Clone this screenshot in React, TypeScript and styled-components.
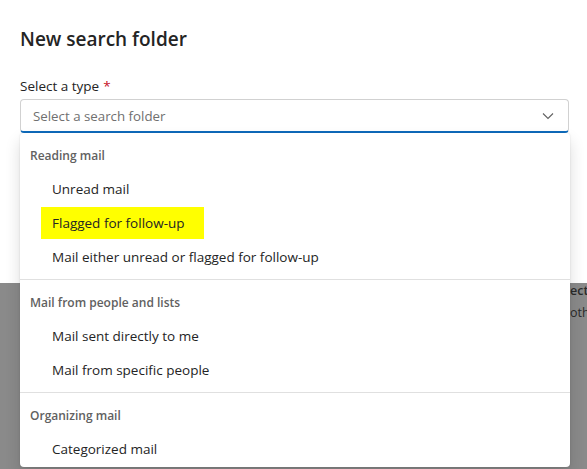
import React from "react";
import styled, { createGlobalStyle } from "styled-components";

const Global = createGlobalStyle`
  html, body { margin: 0; padding: 0; }
  body {
    width: 587px;
    height: 469px;
    overflow: hidden;
    font-family: "Open Sans", "Segoe UI", "Liberation Sans", Arial, sans-serif;
    -webkit-font-smoothing: antialiased;
  }
`;

const Page = styled.div`
  position: relative;
  width: 587px;
  height: 469px;
  background: #8a8a8a;
  overflow: hidden;
  display: flex;
  flex-direction: column;
`;

const Dialog = styled.div`
  height: 283px;
  flex: none;
  background: #ffffff;
  padding: 25px 18px 0 20px;
  box-sizing: border-box;
  display: flex;
  flex-direction: column;
`;

const Title = styled.h2`
  margin: 0;
  font-size: 19px;
  font-weight: 600;
  line-height: 28px;
  color: #242424;
`;

const Field = styled.div`
  position: relative;
  margin-top: 23px;
  display: flex;
  flex-direction: column;
  gap: 3px;
`;

const Label = styled.label`
  font-size: 13.5px;
  line-height: 20px;
  color: #242424;
`;

const Required = styled.span`
  color: #c50f1f;
  padding-left: 4px;
`;

const Combo = styled.div`
  height: 34px;
  box-sizing: border-box;
  border: 1px solid #d1d1d1;
  border-bottom: 2px solid #0f6cbd;
  border-radius: 4px;
  display: flex;
  align-items: center;
  justify-content: space-between;
  padding: 1px 14px 0 12px;
  font-size: 13.3px;
  color: #707070;
`;

const Menu = styled.div`
  position: absolute;
  top: 100%;
  left: 0;
  width: 550px;
  height: 334px;
  background: #ffffff;
  border-radius: 4px;
  box-shadow: 0 0 2px rgba(0, 0, 0, 0.12), 0 8px 16px rgba(0, 0, 0, 0.14);
  display: flex;
  flex-direction: column;
  overflow: hidden;
`;

const Group = styled.div`
  display: flex;
  flex-direction: column;
  flex: none;
  padding: 4px 0 5px;
  & + & {
    border-top: 1px solid #e0e0e0;
  }
`;

const GroupHeader = styled.div`
  font-size: 12px;
  font-weight: 600;
  color: #616161;
  line-height: 16px;
  padding: 11px 10px 8px;
`;

const Option = styled.div`
  height: 34px;
  display: flex;
  align-items: center;
  padding-left: 21px;
`;

const OptionText = styled.span<{ $marked?: boolean }>`
  height: 32px;
  display: flex;
  align-items: center;
  padding: 0 ${(p) => (p.$marked ? 19 : 11)}px 0 11px;
  font-size: 13.5px;
  color: #242424;
  background: ${(p) => (p.$marked ? "#ffff00" : "transparent")};
`;

const Beneath = styled.div`
  flex: 1;
  display: flex;
  flex-direction: column;
  gap: 6px;
  padding-left: 570px;
  white-space: nowrap;
  font-size: 12.5px;
  color: #2a2a2a;
  line-height: 16px;
`;

const BeneathLine = styled.span<{ $bold?: boolean }>`
  font-weight: ${(p) => (p.$bold ? 600 : 400)};
`;

const Chevron = () => (
  <svg width="12" height="12" viewBox="0 0 12 12" fill="none">
    <path d="M1 3.5 L6 8.5 L11 3.5" stroke="#616161" strokeWidth="1.1" />
  </svg>
);

const groups = [
  {
    title: "Reading mail",
    items: ["Unread mail", "Flagged for follow-up", "Mail either unread or flagged for follow-up"],
  },
  { title: "Mail from people and lists", items: ["Mail sent directly to me", "Mail from specific people"] },
  { title: "Organizing mail", items: ["Categorized mail"] },
];

export default function App() {
  return (
    <>
      <Global />
      <Page>
        <Dialog>
          <Title>New search folder</Title>
          <Field>
            <Label>
              Select a type<Required>*</Required>
            </Label>
            <Combo>
              <span>Select a search folder</span>
              <Chevron />
            </Combo>
            <Menu>
              {groups.map((g) => (
                <Group key={g.title}>
                  <GroupHeader>{g.title}</GroupHeader>
                  {g.items.map((it) => (
                    <Option key={it}>
                      <OptionText $marked={it === "Flagged for follow-up"}>{it}</OptionText>
                    </Option>
                  ))}
                </Group>
              ))}
            </Menu>
          </Field>
        </Dialog>
        <Beneath>
          <BeneathLine $bold>ect</BeneathLine>
          <BeneathLine>oth</BeneathLine>
        </Beneath>
      </Page>
    </>
  );
}
